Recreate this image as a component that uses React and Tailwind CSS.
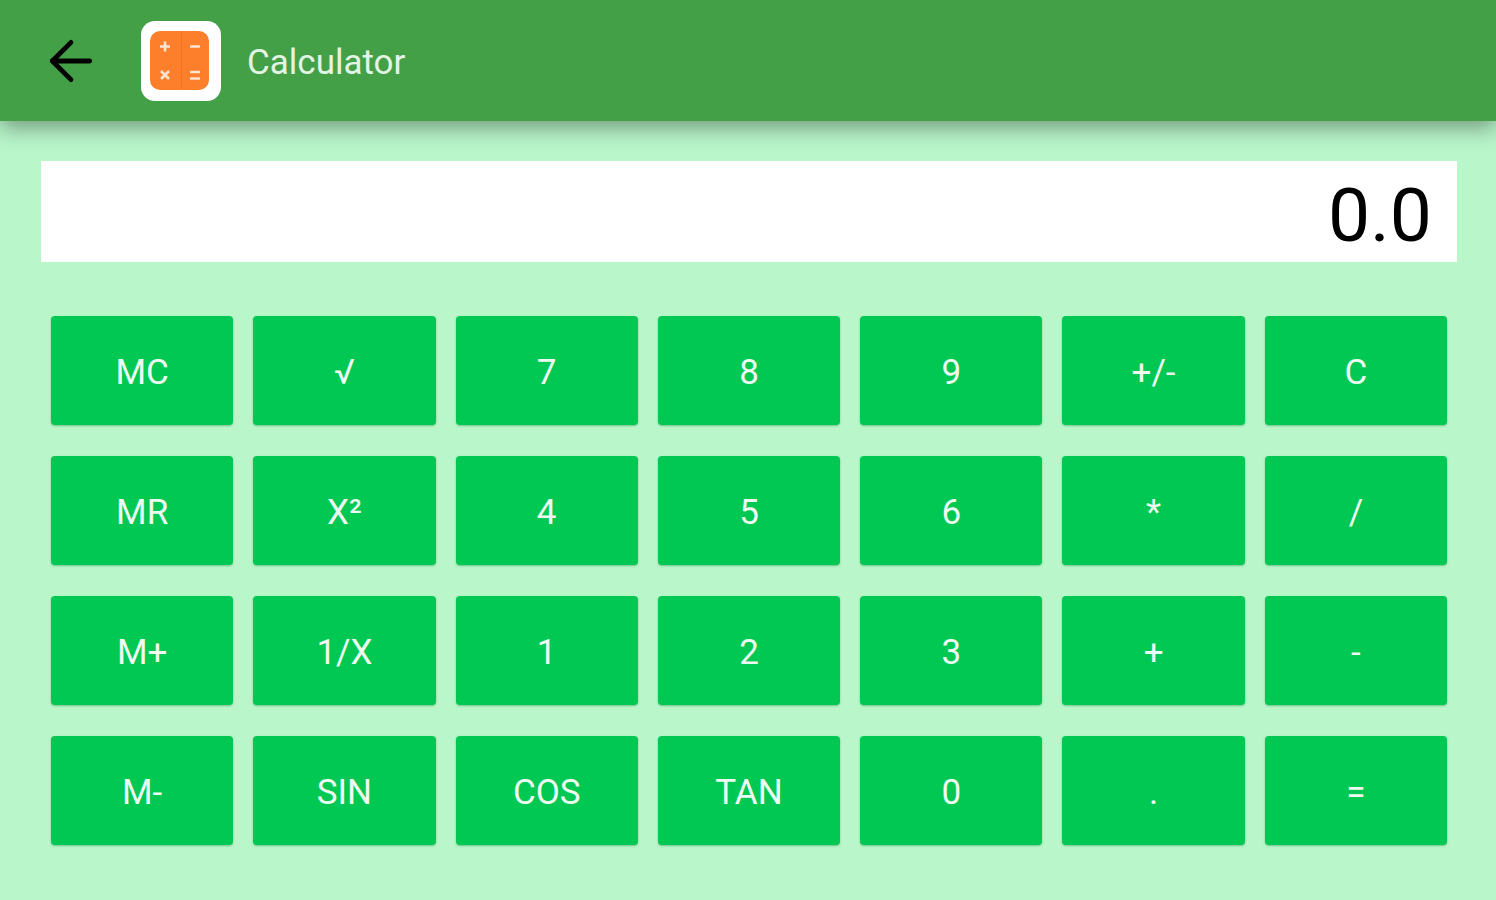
import React from 'react';
import { ArrowLeft } from 'lucide-react';

const keys = [
  'MC', '√', '7', '8', '9', '+/-', 'C',
  'MR', 'X²', '4', '5', '6', '*', '/',
  'M+', '1/X', '1', '2', '3', '+', '-',
  'M-', 'SIN', 'COS', 'TAN', '0', '.', '=',
];

const AppIcon = () => (
  <div className="flex h-20 w-20 items-center justify-center rounded-[14px] bg-white pr-[3px]">
    <svg width="59" height="59" viewBox="0 0 59 59">
      <rect width="59" height="59" rx="10" fill="#fd7f2c" />
      <rect x="31" width="1" height="59" fill="#f07626" />
      <g fill="none" stroke="#fde3d0" strokeWidth="2.6">
        <path d="M15 10.500v10M10 15.500h10" />
        <path d="M40 15.500h10" />
        <path d="M11 40l8 8M19 40l-8 8" />
        <path d="M40 41h10M40 47.500h10" />
      </g>
    </svg>
  </div>
);

const App = () => {
  return (
    <div className="h-[900px] w-full overflow-hidden bg-[#b9f6ca] font-['Roboto',sans-serif]">
      {/* Toolbar */}
      <header className="flex h-[121px] items-center bg-[#43a047] pl-[39px] shadow-[0_6px_22px_rgba(0,0,0,0.4)]">
        <ArrowLeft className="h-16 w-16 text-black" strokeWidth={1.8} />
        <div className="ml-[38px]">
          <AppIcon />
        </div>
        <span className="ml-[26px] pt-[5px] text-[35px] text-[#e3f3e4]">Calculator</span>
      </header>

      {/* Display */}
      <div className="ml-[41px] mr-[39px] mt-10 flex h-[101px] items-center justify-end bg-white pr-[25px]">
        <span className="pt-[7px] text-[75px] leading-none text-black">0.0</span>
      </div>

      {/* Keypad */}
      <div className="ml-[51px] mr-[49px] mt-[54px] grid grid-cols-7 gap-x-5 gap-y-[31px]">
        {keys.map((key) => (
          <button
            key={key}
            type="button"
            className="flex h-[109px] items-center justify-center rounded-[4px] bg-[#00c853] pt-1.5 text-[35px] text-[#eefbf2] shadow-[0_1px_2px_rgba(0,120,50,0.4)]"
          >
            {key}
          </button>
        ))}
      </div>
    </div>
  );
};

export default App;
